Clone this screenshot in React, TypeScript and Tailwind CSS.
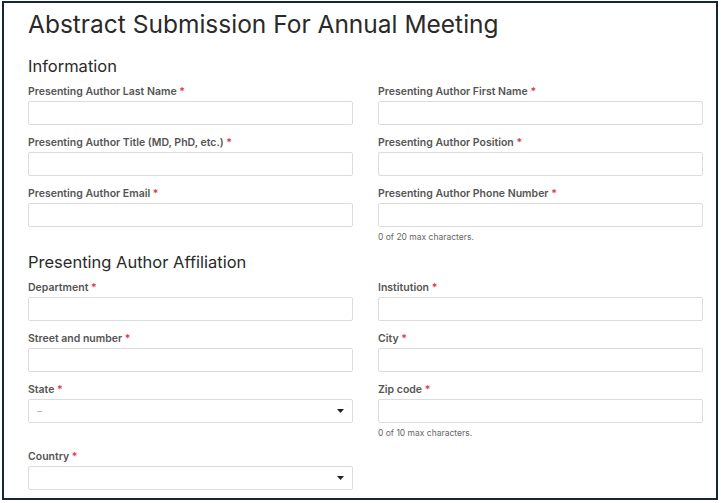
type Field = { label: string; kind?: 'select'; placeholder?: string; help?: string };

const info: [Field, Field][] = [
  [{ label: 'Presenting Author Last Name' }, { label: 'Presenting Author First Name' }],
  [{ label: 'Presenting Author Title (MD, PhD, etc.)' }, { label: 'Presenting Author Position' }],
  [{ label: 'Presenting Author Email' }, { label: 'Presenting Author Phone Number', help: '0 of 20 max characters.' }],
];

const affiliation: [Field, Field | null][] = [
  [{ label: 'Department' }, { label: 'Institution' }],
  [{ label: 'Street and number' }, { label: 'City' }],
  [{ label: 'State', kind: 'select', placeholder: '–' }, { label: 'Zip code', help: '0 of 10 max characters.' }],
  [{ label: 'Country', kind: 'select' }, null],
];

const FormField = ({ field }: { field: Field }) => (
  <div className="flex flex-col">
    <label className="text-[10.5px] leading-[14px] font-semibold text-[#555]">
      {field.label} <span className="text-[#e0384b]">*</span>
    </label>
    {field.kind === 'select' ? (
      <div className="mt-[2px] h-[24px] border border-[#dcdcdc] rounded-[2px] bg-white flex items-center justify-between pl-[8px] pr-[8px]">
        <span className="text-[10px] text-[#aaa]">{field.placeholder ?? ''}</span>
        <svg width="7" height="4" viewBox="0 0 7 4"><path d="M0 0h7L3.5 4z" fill="#222" /></svg>
      </div>
    ) : (
      <div className="mt-[2px] h-[24px] border border-[#dcdcdc] rounded-[2px] bg-white" />
    )}
    {field.help && <p className="mt-[4px] text-[8.5px] leading-[12px] text-[#666]">{field.help}</p>}
  </div>
);

const Rows = ({ rows }: { rows: [Field, Field | null][] }) => (
  <div className="grid grid-cols-2 gap-x-[25px] gap-y-[11px] items-start">
    {rows.map(([a, b], i) => (
      <div key={i} className="contents">
        <FormField field={a} />
        {b ? <FormField field={b} /> : <div />}
      </div>
    ))}
  </div>
);

export default function App() {
  return (
    <div className="w-[721px] h-[503px] bg-white pt-[1px] pl-[2px]" style={{ fontFamily: 'Inter, "Noto Sans", sans-serif' }}>
      <div className="w-[716px] h-[499px] border-2 border-[#15253a] overflow-hidden pl-[24px] pr-[13px] bg-white">
        <h1 className="mt-[5px] text-[24.5px] leading-[32px] text-[#2a2a2a] font-normal">
          Abstract Submission For Annual Meeting
        </h1>
        <h2 className="mt-[16px] text-[16.5px] leading-[20px] text-[#2a2a2a] mb-[9px]">Information</h2>
        <Rows rows={info} />
        <h2 className="mt-[9px] text-[16.5px] leading-[20px] text-[#2a2a2a] mb-[9px]">Presenting Author Affiliation</h2>
        <Rows rows={affiliation} />
      </div>
    </div>
  );
}
